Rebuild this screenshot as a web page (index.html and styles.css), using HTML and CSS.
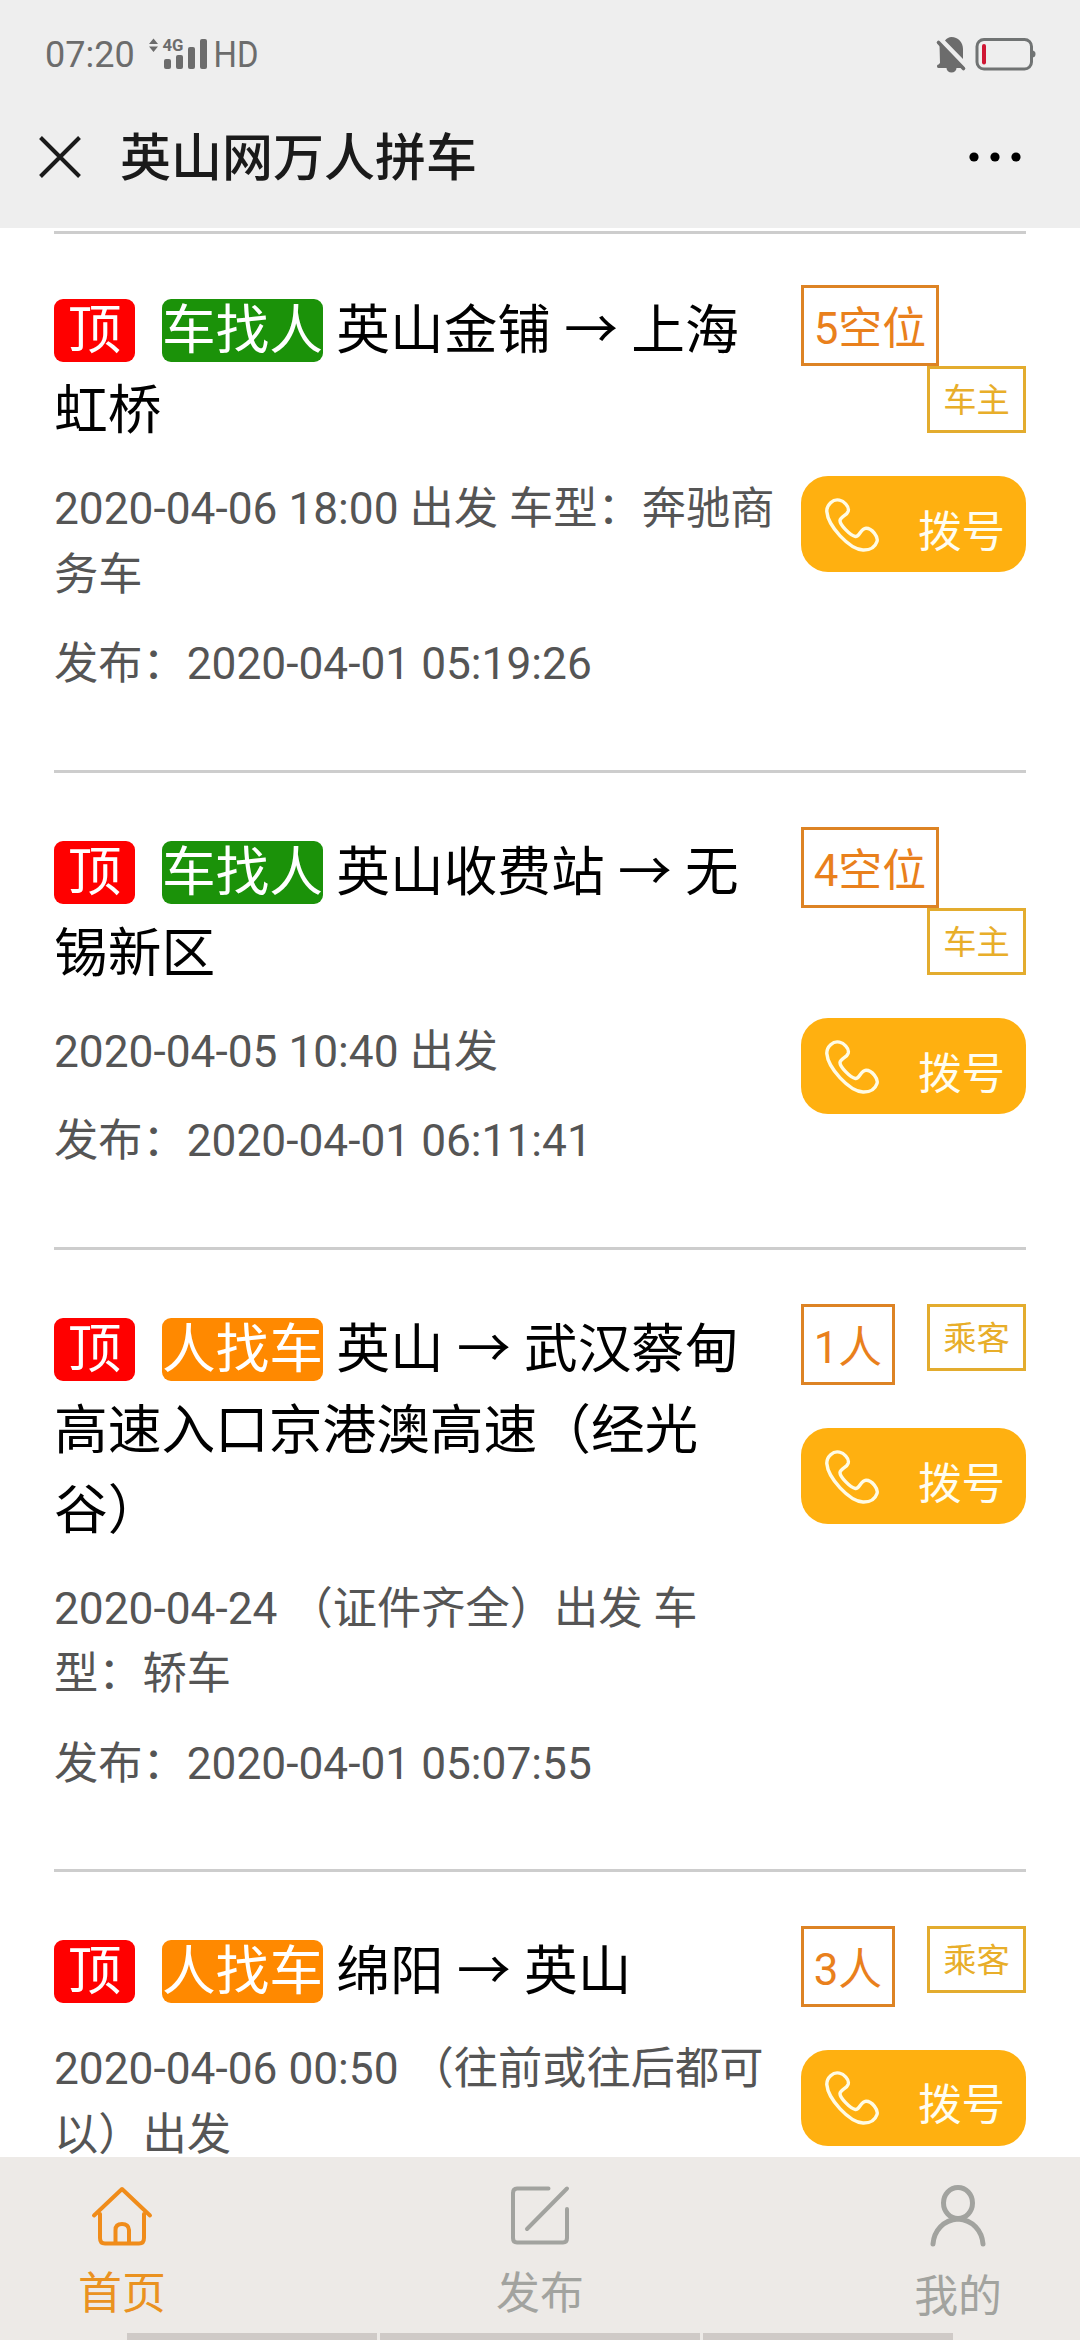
FILE: index.html
```html
<!DOCTYPE html>
<html lang="zh-CN">
<head>
<meta charset="utf-8">
<title>英山网万人拼车</title>
<link rel="stylesheet" href="styles.css">
</head>
<body>
<svg class="sprite" width="0" height="0">
  <symbol id="phone" viewBox="0 0 54 55">
    <path d="M14.500 3.200C18.500 4 24.500 9 23.200 14.200C22 18.500 15.500 19.500 15 23.500C14.800 27.500 25 38.500 30.500 39.500C34.500 40 35.500 31.500 41 31.200C47 31 53.500 40 52 44.500C50 50.500 44.500 53.200 38 53C24 52 3 29 1.800 14.500C1.600 8 8 1.500 14.500 3.200Z" fill="none" stroke="#fffbe4" stroke-width="3.400" stroke-linejoin="round"/>
  </symbol>
</svg>
<div class="screen">
  <header class="top">
    <div class="status">
      <span class="time">07:20</span>
      <svg class="signal" width="116" height="40" viewBox="0 0 116 40">
        <path d="M1 9L5.500 3.500L10 9ZM1 11.500L5.500 17L10 11.500Z" fill="#6c6c6c"/>
        <text class="net" x="14.500" y="16" textLength="21" lengthAdjust="spacingAndGlyphs">4G</text>
        <g fill="#6c6c6c">
          <rect x="16" y="24" width="7" height="10" rx="2"/>
          <rect x="28" y="20" width="7" height="14" rx="2"/>
          <rect x="40" y="12" width="7" height="22" rx="2"/>
          <rect x="52" y="4" width="7" height="30" rx="2"/>
        </g>
        <text class="hd" x="65.500" y="32" textLength="45" lengthAdjust="spacingAndGlyphs">HD</text>
      </svg>
      <svg class="state" width="100" height="40" viewBox="0 0 100 40">
        <path d="M15.500 2C22 2 27 7 27 14V24L9 5.500C10.800 3.300 13 2 15.500 2ZM3.500 9.500L27 33H20.500A5 4.500 0 0 1 10.500 33H3A1.700 1.700 0 0 1 2.500 29.500L4 28Z" fill="#6c6c6c"/>
        <path d="M2.500 7.500L27.500 33.500" stroke="#6c6c6c" stroke-width="3.600" stroke-linecap="round"/>
        <rect x="41" y="4.500" width="54.500" height="29.500" rx="7" fill="none" stroke="#707373" stroke-width="3"/>
        <path d="M96 15.500Q99.500 15.500 99.500 19T96 22.500Z" fill="#707373"/>
        <rect x="46" y="9" width="4" height="20.500" rx="2" fill="#cf1633"/>
      </svg>
    </div>
    <div class="bar">
      <svg class="close" width="42" height="42" viewBox="0 0 42 42"><path d="M1.500 1.500L40.500 40.500M40.500 1.500L1.500 40.500" stroke="#1a1a1a" stroke-width="4"/></svg>
      <h1 class="bar-title">英山网万人拼车</h1>
      <svg class="more" width="52" height="10" viewBox="0 0 52 10"><circle cx="5" cy="5" r="4.600"/><circle cx="26" cy="5" r="4.600"/><circle cx="47" cy="5" r="4.600"/></svg>
    </div>
  </header>

  <main class="list">
    <article class="trip">
      <div class="body">
        <h2 class="route"><span class="tag top-tag">顶</span> <span class="tag driver-tag">车找人</span> 英山金铺 → 上海虹桥</h2>
        <p class="info">2020-04-06 18:00 出发 车型：奔驰商务车</p>
        <p class="info">发布：2020-04-01 05:19:26</p>
      </div>
      <aside class="side">
        <div class="badges"><span class="seats">5空位</span><span class="role">车主</span></div>
        <a class="call"><svg width="54" height="55"><use href="#phone"/></svg><span>拨号</span></a>
      </aside>
    </article>
    <article class="trip">
      <div class="body">
        <h2 class="route"><span class="tag top-tag">顶</span> <span class="tag driver-tag">车找人</span> 英山收费站 → 无锡新区</h2>
        <p class="info">2020-04-05 10:40 出发</p>
        <p class="info">发布：2020-04-01 06:11:41</p>
      </div>
      <aside class="side">
        <div class="badges"><span class="seats">4空位</span><span class="role">车主</span></div>
        <a class="call"><svg width="54" height="55"><use href="#phone"/></svg><span>拨号</span></a>
      </aside>
    </article>
    <article class="trip long">
      <div class="body">
        <h2 class="route"><span class="tag top-tag">顶</span> <span class="tag rider-tag">人找车</span> 英山 → 武汉蔡甸高速入口京港澳高速（经光谷）</h2>
        <p class="info">2020-04-24 （证件齐全）出发 车型：轿车</p>
        <p class="info">发布：2020-04-01 05:07:55</p>
      </div>
      <aside class="side">
        <div class="badges"><span class="seats">1人</span><span class="role">乘客</span></div>
        <a class="call"><svg width="54" height="55"><use href="#phone"/></svg><span>拨号</span></a>
      </aside>
    </article>
    <article class="trip">
      <div class="body">
        <h2 class="route"><span class="tag top-tag">顶</span> <span class="tag rider-tag">人找车</span> 绵阳 → 英山</h2>
        <p class="info">2020-04-06 00:50 （往前或往后都可以）出发</p>
      </div>
      <aside class="side">
        <div class="badges"><span class="seats">3人</span><span class="role">乘客</span></div>
        <a class="call"><svg width="54" height="55"><use href="#phone"/></svg><span>拨号</span></a>
      </aside>
    </article>
  </main>

  <nav class="nav">
    <div class="tabs">
      <a class="tab active">
        <svg width="60" height="62" viewBox="0 0 60 62" fill="none" stroke="#f08c1a" stroke-width="4" stroke-linecap="round" stroke-linejoin="round"><path d="M2 30.500L30 4L58 30.500M8 29V53Q8 58.500 13 58.500H47Q52 58.500 52 53V29M23.500 58V45Q23.500 39 30 39T37 45V58"/></svg>
        <span>首页</span>
      </a>
      <a class="tab">
        <svg width="60" height="62" viewBox="0 0 60 62" fill="none" stroke="#a2a39f" stroke-width="4" stroke-linecap="round"><path d="M38.500 3.500H7Q3 3.500 3 8V53Q3 57.500 7 57.500H53Q57 57.500 57 53V24M57 3.500L17 44"/></svg>
        <span>发布</span>
      </a>
      <a class="tab mine">
        <svg width="60" height="62" viewBox="0 0 60 62" fill="none" stroke="#a2a39f" stroke-width="5" stroke-linecap="round"><ellipse cx="30" cy="18" rx="14.500" ry="15.500"/><path d="M5 59C6 46 15 35 30 34C45 35 54 46 55 59"/></svg>
        <span>我的</span>
      </a>
    </div>
    <div class="hints"><i></i><i></i><i></i></div>
  </nav>
</div>
</body>
</html>
```
FILE: styles.css
```css
* { box-sizing: border-box; }

body {
  margin: 0;
  font-family: Roboto, "Noto Sans CJK SC", sans-serif;
  text-spacing-trim: space-all;
  color: #000;
  background: #fff;
}

h1, h2, p { margin: 0; font-weight: 400; }

svg { display: block; flex: none; overflow: visible; }

.sprite { position: absolute; }

.screen {
  width: 1080px;
  height: 2340px;
  display: flex;
  flex-direction: column;
  overflow: hidden;
}

/* status bar and page title */
.top {
  flex: none;
  height: 228px;
  background: #eee;
}

.status {
  height: 108px;
  display: flex;
  align-items: center;
  padding: 2px 44px 0 45px;
}

.time {
  width: 103px;
  font-size: 36px;
  line-height: 40px;
  color: #6c6c6c;
}

.net { font-size: 17px; font-weight: 700; fill: #6c6c6c; }
.hd { font-size: 36px; fill: #6c6c6c; }

.state { margin-left: auto; }

.bar {
  height: 98px;
  display: flex;
  align-items: center;
  padding: 0 59px 0 39px;
}

.bar-title {
  flex: 1;
  margin-left: 39px;
  padding-top: 3px;
  font-size: 51px;
  font-weight: 500;
  line-height: 76px;
  color: #1a1a1a;
}

/* trip list */
.list {
  flex: 1;
  min-height: 0;
  overflow: hidden;
  padding: 3px 54px 0;
}

.trip {
  display: grid;
  grid-template-columns: 726px 225px;
  justify-content: space-between;
  padding: 54px 0 72.7px;
  border-top: 3px solid #cdcdcd;
}

.trip:first-child { padding-top: 51px; }

.long { padding-bottom: 71.2px; }

.body { padding-top: 6px; }

.route {
  padding-right: 12px;
  font-size: 53.7px;
  line-height: 80.4px;
}

.tag {
  color: #fff;
  border-radius: 9px;
}

.top-tag {
  margin-right: 13.5px;
  padding: 0 13.7px;
  background: #f00;
}

.driver-tag { background: #1b9209; }
.rider-tag { background: #ff8900; }

.info {
  margin-top: 23.3px;
  font-size: 44.25px;
  line-height: 65.8px;
  color: #555;
}

.route + .info { margin-top: 25.3px; }

.badges {
  display: flex;
  flex-wrap: wrap;
  align-items: flex-start;
}

.seats {
  padding: 8px 9.7px 0;
  height: 81px;
  border: 3px solid #dd8324;
  font-size: 43.9px;
  line-height: 66px;
  color: #e9801c;
}

.role {
  width: 99px;
  height: 67px;
  margin-left: auto;
  padding-top: 7px;
  border: 3px solid #e3ac2e;
  font-size: 33.3px;
  line-height: 50px;
  text-align: center;
  color: #e8ae2a;
}

.call {
  height: 96px;
  margin-top: 43px;
  padding: 0 21px 0 24px;
  display: flex;
  align-items: center;
  justify-content: space-between;
  border-radius: 27px;
  background: #ffb010;
  font-size: 43.5px;
  line-height: 66px;
  color: #fffdf0;
}

.call span { padding-top: 17px; }

/* bottom tabs */
.nav {
  flex: none;
  height: 183px;
  display: flex;
  flex-direction: column;
  justify-content: space-between;
  background: #edeae7;
}

.tabs {
  display: flex;
  justify-content: space-between;
  padding: 28px 78px 0;
}

.tab {
  display: flex;
  flex-direction: column;
  align-items: center;
  gap: 14px;
  font-size: 43.9px;
  line-height: 66px;
  color: #a2a39f;
}

.mine { gap: 17px; }

.active { color: #ea9220; }

.hints {
  display: grid;
  grid-template-columns: 250fr 320fr 250fr;
  gap: 3px;
  padding: 0 127px;
}

.hints i {
  height: 7px;
  background: #cfcac7;
}
```
